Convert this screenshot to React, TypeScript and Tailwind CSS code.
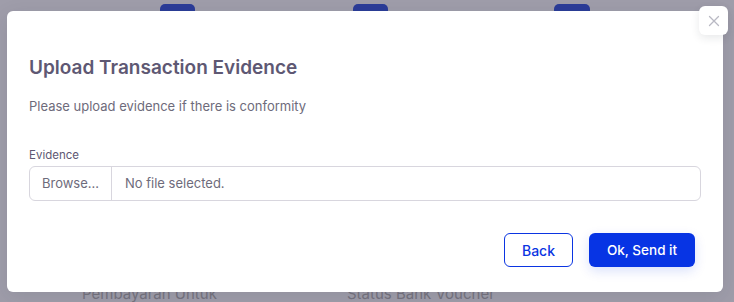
import React from "react";

export default function App() {
  return (
    <div
      className="relative w-[734px] h-[302px] overflow-hidden bg-[#9f9daa]"
      style={{ fontFamily: "Inter, 'Noto Sans', sans-serif" }}
    >
      {/* background page (under overlay) */}
      <div className="flex items-start h-[20px] pt-[4px] text-[#85838f] text-[14px]">
        <span className="ml-[10px] w-[150px] mt-[3px]">Perihal Dat</span>
        <div className="w-[35px] h-[20px] rounded-[5px] bg-[#2b3c98]" />
        <span className="ml-[18px] w-[140px] mt-[6px]">Dat</span>
        <div className="w-[35px] h-[20px] rounded-[5px] bg-[#2b3c98]" />
        <span className="ml-[18px] w-[148px] mt-[6px]">Dat</span>
        <div className="w-[36px] h-[20px] rounded-[5px] bg-[#2b3c98]" />
        <span className="ml-[18px] mt-[6px]">Dat</span>
      </div>
      <div className="absolute left-0 top-[284px] flex text-[15px] leading-[20px] text-[#76737f]">
        <span className="ml-[82px] w-[265px]">Pembayaran Untuk</span>
        <span>Status Bank Voucher</span>
      </div>

      {/* modal */}
      <div className="absolute left-[7px] top-[11px] w-[716px] h-[281px] bg-white rounded-[6px] shadow-[0_5px_20px_rgba(34,41,47,0.1)] px-[22px]">
        <h2 className="mt-[44px] text-[19px] leading-[26px] font-semibold text-[#5e5873]">
          Upload Transaction Evidence
        </h2>
        <p className="mt-[15px] text-[13px] leading-[20px] text-[#6e6b7b]">
          Please upload evidence if there is conformity
        </p>
        <div className="mt-[31px] text-[11.5px] leading-[16px] text-[#5e5873]">Evidence</div>
        <div className="mt-[3px] flex h-[35px] border border-[#d8d6de] rounded-[6px] text-[13px] text-[#6e6b7b] items-stretch">
          <div className="w-[82px] flex items-center justify-center border-r border-[#d8d6de]">Browse...</div>
          <div className="flex items-center pl-[13px]">No file selected.</div>
        </div>
        <div className="mt-[32px] flex justify-end gap-[16px] pr-[6px]">
          <button className="w-[69px] h-[34px] rounded-[6px] border border-[#0b35e2] text-[#0b35e2] text-[14px] font-medium bg-white">
            Back
          </button>
          <button className="w-[106px] h-[34px] rounded-[6px] bg-[#0734e4] text-white text-[13.5px] font-medium shadow-[0_4px_12px_rgba(7,52,228,0.15)]">
            Ok, Send it
          </button>
        </div>
      </div>

      {/* close */}
      <button className="absolute left-[699px] top-[6px] w-[29px] h-[29px] rounded-[6px] bg-white flex items-center justify-center shadow-[0_3px_8px_rgba(34,41,47,0.1)]">
        <svg width="12" height="12" viewBox="0 0 12 12" fill="none" stroke="#b9b9c3" strokeWidth="1.3" strokeLinecap="round">
          <path d="M1.5 1.5L10.5 10.5M10.5 1.5L1.5 10.5" />
        </svg>
      </button>
    </div>
  );
}
